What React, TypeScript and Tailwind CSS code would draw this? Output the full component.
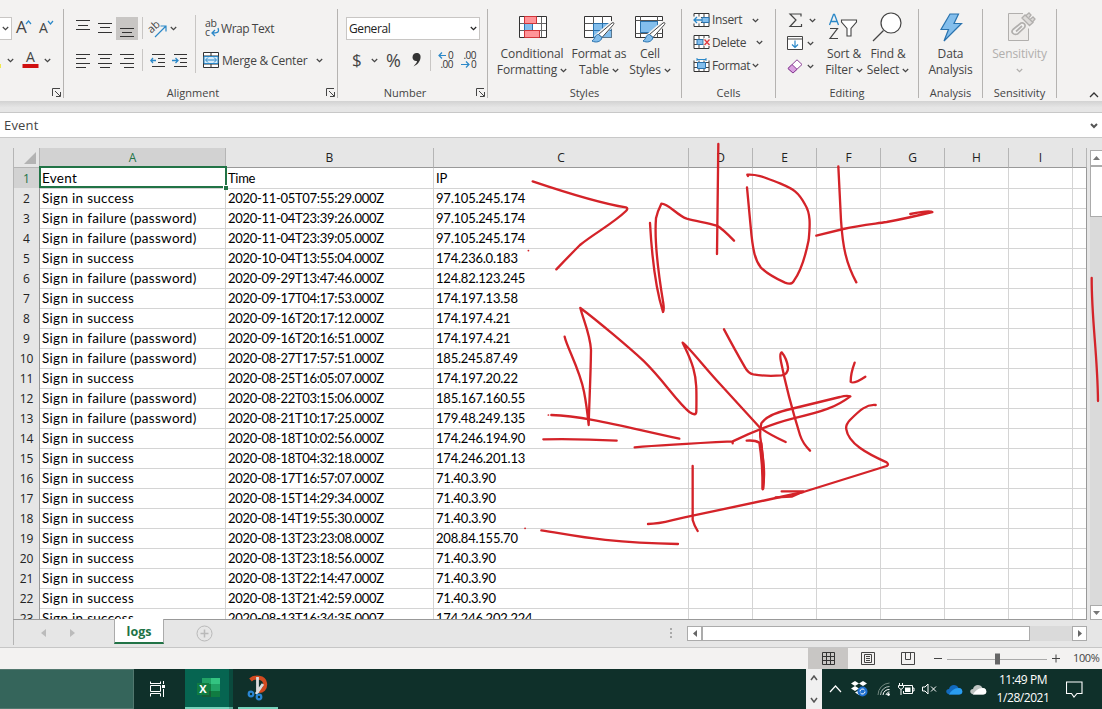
import type { ReactNode } from "react";
import { clsx } from "clsx";

type LogRow = [string, string, string];

const OK = "Sign in success";
const FAIL = "Sign in failure (password)";

const rows: LogRow[] = [
  ["Event", "Time", "IP"],
  [OK, "2020-11-05T07:55:29.000Z", "97.105.245.174"],
  [FAIL, "2020-11-04T23:39:26.000Z", "97.105.245.174"],
  [FAIL, "2020-11-04T23:39:05.000Z", "97.105.245.174"],
  [OK, "2020-10-04T13:55:04.000Z", "174.236.0.183"],
  [FAIL, "2020-09-29T13:47:46.000Z", "124.82.123.245"],
  [OK, "2020-09-17T04:17:53.000Z", "174.197.13.58"],
  [OK, "2020-09-16T20:17:12.000Z", "174.197.4.21"],
  [FAIL, "2020-09-16T20:16:51.000Z", "174.197.4.21"],
  [FAIL, "2020-08-27T17:57:51.000Z", "185.245.87.49"],
  [OK, "2020-08-25T16:05:07.000Z", "174.197.20.22"],
  [FAIL, "2020-08-22T03:15:06.000Z", "185.167.160.55"],
  [FAIL, "2020-08-21T10:17:25.000Z", "179.48.249.135"],
  [OK, "2020-08-18T10:02:56.000Z", "174.246.194.90"],
  [OK, "2020-08-18T04:32:18.000Z", "174.246.201.13"],
  [OK, "2020-08-17T16:57:07.000Z", "71.40.3.90"],
  [OK, "2020-08-15T14:29:34.000Z", "71.40.3.90"],
  [OK, "2020-08-14T19:55:30.000Z", "71.40.3.90"],
  [OK, "2020-08-13T23:23:08.000Z", "208.84.155.70"],
  [OK, "2020-08-13T23:18:56.000Z", "71.40.3.90"],
  [OK, "2020-08-13T22:14:47.000Z", "71.40.3.90"],
  [OK, "2020-08-13T21:42:59.000Z", "71.40.3.90"],
  [OK, "2020-08-13T16:34:35.000Z", "174.246.202.224"],
];

const gridCols = "grid grid-cols-[27px_186px_208px_255px_64px_64px_64px_64px_64px_64px_14px]";
const columns = ["A", "B", "C", "D", "E", "F", "G", "H", "I", ""];
const cellText = ["text-[13.5px] tracking-[0.3px]", "text-[13px] tracking-[-0.3px]", "text-[13px] tracking-[-0.22px]"];

function Chevron({ className = "" }: { className?: string }) {
  return (
    <svg width="7" height="5" viewBox="0 0 7 5" className={clsx("shrink-0", className)}>
      <path d="M.8 1 3.5 3.7 6.2 1" fill="none" stroke="currentColor" strokeWidth="1.2" />
    </svg>
  );
}

function Launcher({ className = "" }: { className?: string }) {
  return (
    <svg width="9" height="9" viewBox="0 0 9 9" className={clsx("shrink-0", className)} fill="none" stroke="#444" strokeWidth="1">
      <path d="M.5 8V.5H8M3 3l5 5M8.5 4v4.5H4" />
    </svg>
  );
}

function Group({ label, width, launcher, children }: { label: string; width: string; launcher?: boolean; children: ReactNode }) {
  return (
    <section className={clsx("mt-[9px] flex h-[89px] shrink-0 flex-col border-r border-[#b5b3b1]", width)}>
      <div className="flex h-[78px]">{children}</div>
      <div className="flex h-[11px] items-center justify-center">
        <span className={clsx("flex-1 text-center text-[11px] leading-[11px] whitespace-nowrap", launcher && "pr-1")}>{label}</span>
        {launcher && <Launcher className="mr-[2px]" />}
      </div>
    </section>
  );
}

function Lines({ y, x1, x2 }: { y: number[]; x1: number[]; x2: number[] }) {
  return (
    <svg width="22" height="23" viewBox="0 0 22 23" stroke="#333" strokeWidth="1" className="shrink-0">
      {y.map((v, i) => (
        <path key={v} d={`M${x1[i]} ${v + 0.5}H${x2[i]}`} />
      ))}
    </svg>
  );
}

function Indent({ out }: { out?: boolean }) {
  return (
    <svg width="16" height="15" viewBox="0 0 16 15" fill="none" className="shrink-0">
      <path d="M2 1.5h13M8 5.5h7M8 9.5h7M2 13.5h13" stroke="#333" />
      <path d={out ? "M6 7.5H1M3 5 .8 7.5 3 10" : "M0 7.5h5.500M3.500 5 6 7.500 3.500 10"} stroke="#2b88c8" strokeWidth="1.300" />
    </svg>
  );
}

function BigButton({ icon, top, bottom, width, disabled, ml = "" }: { icon: ReactNode; top: string; bottom: string; width: string; disabled?: boolean; ml?: string }) {
  return (
    <div className={clsx("flex shrink-0 flex-col items-center text-[12px] leading-4 tracking-[-0.12px] whitespace-nowrap", width, ml, disabled && "text-[#b1afad]")}>
      <div className="flex h-[37px] items-start justify-center">{icon}</div>
      <span>{top}</span>
      {bottom === "Analysis" ? (
        <span>{bottom}</span>
      ) : (
        <span className="flex h-4 items-center gap-[3px]">
          {bottom}
          <Chevron />
        </span>
      )}
    </div>
  );
}

function CondIcon() {
  return (
    <svg width="28" height="24" viewBox="0 0 28 24" className="mt-[6px] mr-[-1px]">
      <path d="M.5 1.500h27v21H.5z" fill="#fff" />
      <path d="M.5 8.500h27M.5 15.500h27M5.500 1v21M22.500 1v21" stroke="#666" />
      <path d="M5.500 1.500h12v7h-12zM5.500 15.500h15v7h-15z" fill="#ff9498" stroke="#d13438" />
      <path d="M5.500 8.500h8v7h-8z" fill="#83beec" stroke="#2a73ae" />
      <path d="M.5 1.500h27v21H.5z" fill="none" stroke="#333" />
      <path d="M5.500 1.500h12v7h-12zM5.500 15.500h15v7h-15z" fill="none" stroke="#d13438" />
    </svg>
  );
}

function TableIcon({ cell }: { cell?: boolean }) {
  return (
    <svg width="31" height="28" viewBox="0 0 31 28" className="mt-[6px]">
      <path d="M.5 1.500h27v21H.5z" fill="#fff" stroke="#333" />
      {cell ? (
        <>
          <path d="M.5 5.500h27M.5 18.500h27M5.500 1v21M22.500 1v21" stroke="#555" />
          <path d="M5.500 6.500h17v11h-17z" fill="#83beec" stroke="#2a73ae" />
        </>
      ) : (
        <>
          <path d="M9.500 8.500h18v14h-18z" fill="#83beec" />
          <path d="M.5 8.500h27M.5 15.500h27M9.500 1v21M18.500 1v21" stroke="#555" />
          <path d="M9.500 8.500h18M9.500 8.500v14M9.500 15.500h18M18.500 8.500v14" stroke="#2a73ae" />
        </>
      )}
      <path d="M12 23 29.500 8" stroke="#f3f2f1" strokeWidth="6" />
      <path d="M14.500 19.500 28 8c1.500-1 2.500 0 1.500 1.500L18 22.500z" fill="#fff" stroke="#444" />
      <path d="M8 26c4 2 9 1 10-3.500L14.500 19.500c-4 0-3 4.500-6.500 6.500z" fill="#83beec" stroke="#2a73ae" />
    </svg>
  );
}

function CellsIcon({ kind }: { kind: "insert" | "delete" | "format" }) {
  return (
    <svg width="17" height="15" viewBox="0 0 17 15" fill="none" className="shrink-0">
      <path d="M1 .5h15v13H1z" fill="#fff" stroke="#333" />
      <path d="M1 4.500h15M1 9.500h15M6 .5v13M11 .5v13" stroke="#444" />
      {kind === "insert" && (
        <>
          <path d="M9 4.500h7v5H9z" fill="#83beec" stroke="#2a73ae" />
          <path d="M0 3.500h8v7H0z" fill="#f3f2f1" />
          <path d="M9 7H1M4 4 1 7l3 3" stroke="#2b88c8" strokeWidth="1.300" />
        </>
      )}
      {kind === "delete" && (
        <>
          <path d="M4 4.500h6v5H4z" fill="#83beec" stroke="#2a73ae" />
          <path d="M10.500 3h7v8h-7z" fill="#f3f2f1" />
          <path d="m11.500 4.500 5 5.500M16.500 4.500l-5 5.500" stroke="#e03a3e" strokeWidth="1.300" />
        </>
      )}
      {kind === "format" && (
        <>
          <path d="M0 0h17v2.500H0z" fill="#f3f2f1" />
          <path d="M4.500 4.500h8v6h-8z" fill="#83beec" stroke="#2a73ae" />
          <path d="M4 1.500h9M4 0v3M13 0v3" stroke="#2b88c8" />
        </>
      )}
    </svg>
  );
}

function FontGroup() {
  return (
    <Group label="" width="w-16" launcher>
      <div className="flex flex-col pt-[3px]">
        <div className="flex h-8 items-center">
          <div className="flex h-[23px] w-3 items-center justify-center border-y border-r border-[#c8c6c4] bg-white">
            <Chevron />
          </div>
          <svg width="50" height="24" className="ml-1 shrink-0 overflow-visible">
            <text x="0" y="17" fontSize="17" fill="#444">A</text>
            <path d="m10 8 2.500-3L15 8" fill="none" stroke="#2b88c8" strokeWidth="1.200" />
            <text x="23" y="17" fontSize="14" fill="#444">A</text>
            <path d="m32 5 2.500 3L37 5" fill="none" stroke="#2b88c8" strokeWidth="1.200" />
          </svg>
        </div>
        <div className="flex h-8 items-center">
          <span className="mt-3 h-1 w-px bg-[#f1e94b]" />
          <Chevron className="ml-1.5" />
          <svg width="17" height="20" className="ml-2 shrink-0 overflow-visible">
            <text x="8.500" y="11.500" fontSize="14" textAnchor="middle" fill="#444">A</text>
            <path d="M.5 14h16v4H.5z" fill="#d01010" />
          </svg>
          <Chevron className="ml-[5px]" />
        </div>
      </div>
    </Group>
  );
}

function AlignmentGroup() {
  return (
    <Group label="Alignment" width="w-[274px]" launcher>
      <div className="w-[131px] pt-[3px] pl-2">
        <div className="flex h-8 items-center">
          <Lines y={[3, 8, 12]} x1={[4, 6, 4]} x2={[18, 16, 18]} />
          <Lines y={[6, 10, 15]} x1={[4, 6, 4]} x2={[18, 16, 18]} />
          <div className="bg-[#c8c6c4]">
            <Lines y={[11, 15, 19]} x1={[4, 6, 4]} x2={[18, 16, 18]} />
          </div>
          <span className="ml-1 h-[22px] w-px bg-[#c8c6c4]" />
          <svg width="19" height="19" viewBox="0 0 19 19" className="ml-1.5 shrink-0 overflow-visible">
            <text x="0" y="11" fontSize="11" fill="#444" transform="rotate(-42 6 10)">ab</text>
            <path d="m6 18 10.500-10.500M11.500 7h5.500v5.500" fill="none" stroke="#2b88c8" strokeWidth="1.200" />
          </svg>
          <Chevron className="ml-[2px]" />
        </div>
        <div className="flex h-8 items-center">
          <Lines y={[5, 9, 14, 18]} x1={[4, 4, 4, 4]} x2={[18, 14, 18, 14]} />
          <Lines y={[5, 9, 14, 18]} x1={[4, 6, 4, 6]} x2={[18, 16, 18, 16]} />
          <Lines y={[5, 9, 14, 18]} x1={[4, 8, 4, 8]} x2={[18, 18, 18, 18]} />
          <span className="ml-1 h-[22px] w-px bg-[#c8c6c4]" />
          <span className="ml-[7px] flex gap-1.5">
            <Indent out />
            <Indent />
          </span>
        </div>
      </div>
      <span className="mt-1.5 h-[58px] w-px bg-[#c8c6c4]" />
      <div className="pt-[3px] pl-[7px] text-[12px] whitespace-nowrap">
        <div className="flex h-8 items-center tracking-[-0.45px]">
          <svg width="14" height="18" viewBox="0 0 14 18" className="mr-[2px] ml-[2px] shrink-0 overflow-visible">
            <text x="0" y="8" fontSize="10.500" fill="#444">ab</text>
            <text x="0" y="16.500" fontSize="10.500" fill="#444">c</text>
            <path d="M13 9c2 5-2 5-6 5M10 11l-3 3 3 3" fill="none" stroke="#2b88c8" strokeWidth="1.300" />
          </svg>
          <span className="pt-px">Wrap Text</span>
        </div>
        <div className="flex h-8 items-center tracking-[-0.2px]">
          <svg width="16" height="16" viewBox="0 0 16 16" className="mr-[3px] shrink-0" fill="none">
            <path d="M.5 .5h15v15H.5z" fill="#fff" stroke="#333" />
            <path d="M8 0v4M8 12v4M0 4h16M0 12h16" stroke="#333" />
            <path d="M1 4.500h14v7H1z" fill="#d9ecf9" stroke="#2b88c8" />
            <path d="M3 8h10M5 5.500 2.500 8 5 10.500M11 5.500 13.500 8 11 10.500" stroke="#2b88c8" />
          </svg>
          <span className="pt-px">Merge &amp; Center</span>
          <Chevron className="ml-[9px]" />
        </div>
      </div>
    </Group>
  );
}

function NumberGroup() {
  return (
    <Group label="Number" width="w-[150px]" launcher>
      <div className="pt-[3px] pl-2">
        <div className="flex h-8 items-center">
          <div className="flex h-[23px] w-[134px] items-center justify-between border border-[#c8c6c4] bg-white pt-px pr-[2px] pl-[2px] text-[12px] tracking-[-0.4px] text-[#222]">
            General
            <Chevron />
          </div>
        </div>
        <div className="flex h-8 items-center">
          <span className="ml-1.5 w-3 text-[17px] leading-5">$</span>
          <Chevron className="ml-[7px]" />
          <span className="ml-[8px] w-[19px] text-[18px] leading-5">%</span>
          <svg width="10" height="14" viewBox="0 0 10 14" className="ml-[7px]">
            <path d="M4.500 0C7.500 0 9 2 8.500 5 8 9 5 12 1.500 13.500 3.500 11 5 9.500 5 8 2.500 8.500.5 6.500.5 4.200.5 1.500 2.500 0 4.500 0z" fill="#333" />
          </svg>
          <span className="ml-[8px] h-[21px] w-px bg-[#c8c6c4]" />
          <svg width="17" height="18" className="ml-[7px] shrink-0 overflow-visible">
            <text x="10" y="8" fontSize="10" fill="#333">0</text>
            <text x="2.500" y="17" fontSize="10" fill="#333" textLength="13">.00</text>
            <path d="M8 4.500H1M4 1.500 1 4.500l3 3" fill="none" stroke="#2b88c8" strokeWidth="1.200" />
          </svg>
          <svg width="17" height="18" className="ml-[6px] shrink-0 overflow-visible">
            <text x="2.500" y="8" fontSize="10" fill="#333" textLength="13">.00</text>
            <text x="10" y="17" fontSize="10" fill="#333">0</text>
            <path d="M0 13.500h8M5 10.500l3 3-3 3" fill="none" stroke="#2b88c8" strokeWidth="1.200" />
          </svg>
        </div>
      </div>
    </Group>
  );
}

function Ribbon() {
  return (
    <div className="flex h-[101px] bg-[#f3f2f1] text-[#444]">
      <FontGroup />
      <AlignmentGroup />
      <NumberGroup />
      <Group label="Styles" width="w-[194px]">
        <BigButton icon={<CondIcon />} top="Conditional" bottom="Formatting" width="w-[72px]" ml="ml-2" />
        <BigButton icon={<TableIcon />} top="Format as" bottom="Table" width="w-[56px]" ml="ml-[3px]" />
        <BigButton icon={<TableIcon cell />} top="Cell" bottom="Styles" width="w-[44px]" ml="ml-[1px]" />
      </Group>
      <Group label="Cells" width="w-[94px]">
        <div className="flex flex-col pl-[11px] text-[12px] tracking-[-0.35px]">
          <div className="flex h-[22px] items-center gap-[2px]"><CellsIcon kind="insert" />Insert<Chevron className="ml-2" /></div>
          <div className="flex h-[23px] items-center gap-[2px]"><CellsIcon kind="delete" />Delete<Chevron className="ml-2" /></div>
          <div className="flex h-[23px] items-center gap-[2px]"><CellsIcon kind="format" />Format<Chevron /></div>
        </div>
      </Group>
      <Group label="Editing" width="w-[143px]">
        <div className="flex flex-col pl-[11px]">
          <div className="flex h-[22px] items-center">
            <svg width="15" height="15" viewBox="0 0 15 15" className="ml-px"><path d="M13 3.500V1H2l6 6-6 6.500h11.500V11" fill="none" stroke="#444" strokeWidth="1.200" /></svg>
            <Chevron className="ml-[6px]" />
          </div>
          <div className="flex h-6 items-center">
            <svg width="16" height="14" viewBox="0 0 16 14" fill="none"><path d="M.5.5h15v13H.5z" fill="#fff" stroke="#444" /><path d="M.5 3h15" stroke="#444" /><path d="M8 4.500v7M5 8.500l3 3 3-3" stroke="#2b88c8" strokeWidth="1.200" /></svg>
            <Chevron className="ml-[4px]" />
          </div>
          <div className="flex h-[22px] items-center">
            <svg width="16" height="15" viewBox="0 0 16 15"><path d="M1 9.500 10 .8 15 5.500 6 14z" fill="#fff" stroke="#8a3f96" /><path d="M1 9.500 5 5.500l5 4.800L6 14z" fill="#d9a0e0" stroke="#8a3f96" /></svg>
            <Chevron className="ml-[4px]" />
          </div>
        </div>
        <BigButton
          ml="ml-[6px]"
          width="w-[44px]"
          top="Sort &"
          bottom="Filter"
          icon={
            <svg width="30" height="28" viewBox="0 0 30 28" className="mt-1 mr-[2px]" fill="none">
              <path d="m1.500 12 4-10.500h1l4 10.500M3 8.500h6" stroke="#2b88c8" strokeWidth="1.300" />
              <path d="M2 15.500h7.500L2 25.500h8" stroke="#444" strokeWidth="1.200" />
              <path d="M13.500 7h15v2L23 15.500V23h-4v-7.500L13.500 9z" fill="#fff" stroke="#444" strokeWidth="1.100" />
            </svg>
          }
        />
        <BigButton
          width="w-[44px]"
          top="Find &"
          bottom="Select"
          icon={
            <svg width="30" height="30" viewBox="0 0 30 30" className="mt-[3px] mr-[3px]" fill="none" stroke="#444" strokeWidth="1.200">
              <circle cx="19" cy="11" r="10" fill="#fff" />
              <path d="M11.500 18.500 1 29" />
            </svg>
          }
        />
      </Group>
      <Group label="Analysis" width="w-16">
        <BigButton
          width="w-[63px]"
          top="Data"
          bottom="Analysis"
          icon={
            <svg width="24" height="29" viewBox="0 0 24 29" className="mt-1">
              <path d="M11 1h8.500L15 10.500h7.500L5 28l4.500-11.500H2z" fill="#83beec" stroke="#2a73ae" strokeWidth="1.200" />
            </svg>
          }
        />
      </Group>
      <Group label="Sensitivity" width="w-[74px]">
        <BigButton
          disabled
          width="w-[73px]"
          top="Sensitivity"
          bottom=""
          icon={
            <svg width="28" height="31" viewBox="0 0 28 31" className="mt-[2px] ml-[5px]" fill="none" stroke="#b1afad">
              <path d="M15 2.500H.5v27h20v-12" fill="#eeecea" />
              <path d="m5 18.500 8-6.500c3-1 5 2 3.500 4.500l-7 6.500c-4 1.500-7-2-4.500-4.500z" fill="#f3f2f1" strokeWidth="1.700" />
              <path d="m8 20.500 6-5.500" strokeWidth="1.700" />
              <path d="m14 7 3-3 8 7.500-3.500 3zM18 4.500 21 2l2 2-2 2.500M22 8.500 25 6l2 2-2.500 3" fill="#dddbd9" strokeWidth="1.300" />
            </svg>
          }
        />
      </Group>
      <svg width="10" height="6" viewBox="0 0 10 6" className="mt-[92px] ml-[32px]"><path d="m1 5 4-4 4 4" fill="none" stroke="#333" strokeWidth="1.300" /></svg>
    </div>
  );
}

function Sheet() {
  return (
    <div className="flex h-[482px] bg-[#e6e6e6] pt-[10px]">
      <div className="ml-[13px] h-[472px] w-[1074px] shrink-0 overflow-hidden border-b border-[#999] font-[Lato,sans-serif]">
        <div className={clsx(gridCols, "h-5")}>
          <div className="flex items-end justify-end border-r border-b border-l border-[#b5b5b5] p-[3px]">
            <svg width="12" height="12"><path d="M12 0v12H0z" fill="#b3b3b3" /></svg>
          </div>
          {columns.map((c, i) => (
            <div
              key={i}
              className={clsx(
                "flex items-center justify-center border-r border-b font-[Open_Sans,sans-serif] text-[12px]",
                i === 0 ? "border-r-[#b5b5b5] border-b-[#217346] bg-[#d2d2d2] text-[#217346]" : "border-r-[#b5b5b5] border-b-[#999] text-[#222]",
              )}
            >
              {c}
            </div>
          ))}
        </div>
        {rows.map((row, r) => (
          <div key={r} className={clsx(gridCols, "h-5 bg-white")}>
            <div
              className={clsx(
                "flex items-center justify-center border-r border-b border-l border-[#b5b5b5] border-r-[#999] font-[Open_Sans,sans-serif] text-[12px] leading-[19px]",
                r === 0 ? "bg-[#d2d2d2] text-[#217346]" : "bg-[#e6e6e6] text-[#222]",
              )}
            >
              {r + 1}
            </div>
            {columns.map((_, c) => (
              <div
                key={c}
                className={clsx("relative border-r border-b border-[#d4d4d4] pl-[2px] leading-[20px] whitespace-nowrap text-black", cellText[c], c === 9 && "border-r-[#999]")}
              >
                {row[c]}
                {r === 0 && c === 0 && (
                  <>
                    <span className="absolute -top-[2px] -left-[1px] h-[22px] w-[188px] border-2 border-[#217346]" />
                    <span className="absolute top-[17px] left-[183px] z-10 h-[5px] w-[5px] border-t border-l border-white bg-[#217346]" />
                  </>
                )}
              </div>
            ))}
          </div>
        ))}
      </div>
      <div className="mt-[2px] ml-[3px] flex w-3 flex-col bg-[#dadada]">
        <div className="flex h-4 items-center justify-center border border-r-0 border-[#ababab] bg-white">
          <svg width="7" height="4"><path d="M3.500 0 7 4H0z" fill="#777" /></svg>
        </div>
        <div className="h-[51px] border border-r-0 border-[#ababab] bg-white" />
        <div className="mt-auto flex h-[15px] items-center justify-center border border-r-0 border-[#ababab] bg-white">
          <svg width="7" height="4"><path d="M0 0h7L3.500 4z" fill="#777" /></svg>
        </div>
      </div>
    </div>
  );
}

function SheetTabs() {
  return (
    <div className="flex h-7 border-b border-[#c6c6c6] bg-[#e6e6e6]">
      <div className="ml-[13px] flex h-[25px] w-[101px] items-center border-l border-[#b5b5b5]">
        <svg width="5" height="8" className="ml-[27px]"><path d="M5 0v8L0 4z" fill="#bbb" /></svg>
        <svg width="5" height="8" className="ml-[24px]"><path d="M0 0v8l5-4z" fill="#bbb" /></svg>
      </div>
      <div className="-mt-px flex h-[25px] w-[50px] items-center justify-center border-r border-b-2 border-l border-[#ababab] border-b-[#217346] bg-white pt-[4px] text-[12.5px] font-bold text-[#217346]">
        logs
      </div>
      <svg width="17" height="17" viewBox="0 0 17 17" className="mt-[5px] ml-8" fill="none" stroke="#b9b9b9">
        <circle cx="8.500" cy="8.500" r="7.500" />
        <path d="M8.500 4.500v8M4.500 8.500h8" strokeWidth="1.500" />
      </svg>
      <svg width="2" height="12" className="mt-[8px] ml-[457px]" fill="#aaa"><path d="M0 0h2v2H0zM0 4h2v2H0zM0 8h2v2H0z" /></svg>
      <div className="mt-[6px] ml-[15px] flex h-[15px] w-[400px] bg-[#dadada]">
        <div className="flex w-[15px] items-center justify-center border border-[#ababab] bg-white">
          <svg width="4" height="7"><path d="M4 0v7L0 3.500z" fill="#666" /></svg>
        </div>
        <div className="w-[328px] border border-[#ababab] bg-white" />
        <div className="ml-auto flex w-[15px] items-center justify-center border border-[#ababab] bg-white">
          <svg width="4" height="7"><path d="M0 0v7l4-3.500z" fill="#666" /></svg>
        </div>
      </div>
    </div>
  );
}

function StatusBar() {
  return (
    <div className="flex h-[21px] items-center bg-[#f3f2f1] pl-[808px] text-[11px] text-[#444]">
      <div className="flex h-full w-10 items-center justify-center bg-[#c8c6c4]">
        <svg width="13" height="13" fill="none" stroke="#333"><path d="M.5.500h12v12H.5zM4.500 0v13M8.500 0v13M0 4.500h13M0 8.500h13" /></svg>
      </div>
      <div className="flex w-10 items-center justify-center">
        <svg width="14" height="13" fill="none" stroke="#444"><path d="M.5.500h13v12H.5zM3.500 2.500h7v8h-7zM5 4.500h4M5 6.500h4M5 8.500h4" /></svg>
      </div>
      <div className="flex w-10 items-center justify-center">
        <svg width="14" height="13" fill="none" stroke="#444"><path d="M.5.500h13v12H.5zM4.500 0v7.500h5M9.500 0v7.500" /></svg>
      </div>
      <svg width="128" height="12" viewBox="0 0 128 12" className="ml-[5px] shrink-0" fill="none" stroke="#444">
        <path d="M1 5.500h8" />
        <path d="M14 6.500h100" stroke="#aaa" />
        <path d="M62 .5h5v11h-5z" fill="#666" stroke="none" />
        <path d="M119 5.500h8M123 1.500v8" />
      </svg>
      <span className="ml-[12px] tracking-[-0.4px]">100%</span>
    </div>
  );
}

function Taskbar() {
  return (
    <div className="flex h-10 bg-[#0f302a] text-white">
      <div className="w-[134px] border-y border-r border-[#52786f] bg-[#35655b]" />
      <svg width="17" height="16" viewBox="0 0 17 16" className="mt-3 ml-[15px]" fill="none" stroke="#fff">
        <path d="M1.500 3V.5M1 2.500h11M11.500.5v2.500M1.500 4.500h10v6h-10zM1.500 15.500V12.500h10v3M14.500 0v3M14.500 8v8" />
        <path d="M13 4h3v3h-3z" fill="#fff" stroke="none" />
      </svg>
      <div className="ml-[19px] flex h-10 w-[44px] items-center justify-center border-b-2 border-[#76d3bb] bg-[#066551]">
        <svg width="24" height="20" viewBox="0 0 24 20" className="ml-1">
          <path d="M5 0h18v19H5z" fill="#185c37" />
          <path d="M5 0h9v6H5z" fill="#21a366" />
          <path d="M14 0h9v6h-9z" fill="#33c481" />
          <path d="M14 6h9v7h-9z" fill="#21a366" />
          <path d="M5 6h9v7H5zM14 13h9v6h-9z" fill="#107c41" />
          <path d="M0 5h12v12H0z" fill="#107c41" />
          <text x="6" y="15" fontSize="11" fontWeight="700" textAnchor="middle" fill="#fff">X</text>
        </svg>
      </div>
      <div className="h-10 w-1 border-b-2 border-[#5fae9c] bg-[#0a4a3d]" />
      <div className="ml-[5px] flex h-10 w-10 items-center justify-center border-b-2 border-[#76d3bb]">
        <svg width="22" height="26" viewBox="0 0 22 26" fill="none">
          <path d="M3.500 5C8 1 17 2 18 8c1 6-3 8-6 8" stroke="#d24a20" strokeWidth="4" />
          <path d="M10.500 2v16M16 9 9 19" stroke="#dcdcdc" strokeWidth="2.800" />
          <circle cx="4" cy="19" r="2.300" stroke="#2a86d4" strokeWidth="2.200" />
          <circle cx="12" cy="22" r="2.300" stroke="#2a86d4" strokeWidth="2.200" />
        </svg>
      </div>
      <div className="ml-auto flex h-10 w-4 flex-col items-center justify-between bg-[#f0f0f0] py-[6px] text-[#555]">
        <svg width="8" height="6" fill="none" stroke="#555" strokeWidth="1.500"><path d="m1 5 3-4 3 4" /></svg>
        <svg width="8" height="6" fill="none" stroke="#555" strokeWidth="1.500"><path d="m1 1 3 4 3-4" /></svg>
      </div>
      <div className="flex w-[280px] items-center">
        <svg width="13" height="8" className="ml-[7px]" fill="none" stroke="#fff" strokeWidth="1.200"><path d="m1 7 5.500-6L12 7" /></svg>
        <svg width="17" height="16" viewBox="0 0 17 16" className="ml-[9px]">
          <path d="M4 0l4 2.500L4 5 0 2.500zM12 0l4 2.500L12 5 8 2.500zM4 5l4 2.500L4 10 0 7.500zM4 11.500l4-2.500v5z" fill="#fff" />
          <circle cx="11.500" cy="10.500" r="5" fill="#1d6fd0" />
          <path d="M9 10.500a2.500 2.500 0 0 1 4.500-1.500M14 10.500a2.500 2.500 0 0 1-4.500 1.500" fill="none" stroke="#fff" />
        </svg>
        <svg width="13" height="14" viewBox="0 0 13 14" className="ml-[9px]" fill="none" stroke="#fff">
          <path d="M1 13A12 12 0 0 1 12.500 1" stroke="#71877f" />
          <path d="M3.500 13A9 9 0 0 1 12.500 4.500" stroke="#b5c1bd" />
          <path d="M6 13a6 6 0 0 1 6.500-5.500M9 13c.5-2 2-3 3.500-3" />
          <circle cx="11.500" cy="12.500" r="1" fill="#fff" />
        </svg>
        <svg width="17" height="13" viewBox="0 0 17 13" className="ml-[8px]" fill="none" stroke="#fff">
          <path d="M5.500 2.500h9v8h-9V8M14.500 5h1.500v3h-1.500M1.500 0v2.500M4.500 0v2.500M.5 2.500h5v2L3 6.500.5 4.500zM3 6.500V12" />
          <path d="M7 4.500h5.500v4.500H7z" fill="#fff" stroke="none" />
        </svg>
        <svg width="15" height="12" viewBox="0 0 15 12" className="ml-[7px]" fill="none" stroke="#fff">
          <path d="M.5 4h2.500L6 1v10L3 8H.5zM9 3.500l5 5M14 3.500l-5 5" />
        </svg>
        <svg width="17" height="11" viewBox="0 0 17 11" className="ml-[9px]">
          <path d="M3.500 10.500C-1 10-.5 5 3 5 4 0 11 0 12.500 4c5 0 5 6.500.5 6.500z" fill="#1269bd" />
          <path d="M3 10.500C5 7 8 4 12.500 4c5 0 5 6.500.5 6.500z" fill="#2a9df0" />
        </svg>
        <svg width="17" height="11" viewBox="0 0 17 11" className="ml-[7px]">
          <path d="M3.500 10.500C-1 10-.5 5 3 5 4 0 11 0 12.500 4c5 0 5 6.500.5 6.500z" fill="#bfc4c2" />
          <path d="M3 10.500C5 7 8 4 12.500 4c5 0 5 6.500.5 6.500z" fill="#fff" />
        </svg>
        <div className="ml-[9px] w-[54px] text-center text-[12px] leading-[18px] tracking-[-0.45px] whitespace-nowrap">
          <div>11:49 PM</div>
          <div>1/28/2021</div>
        </div>
        <svg width="17" height="17" viewBox="0 0 17 17" className="ml-[16px]" fill="none" stroke="#fff" strokeWidth="1.100">
          <path d="M.5 1h15.500v11.500h-5L8 16l-2.500-3.500h-5z" />
        </svg>
      </div>
    </div>
  );
}

// Freehand notes drawn over the whole window
function Ink() {
  return (
    <svg
      width="1102"
      height="709"
      viewBox="0 0 1102 709"
      className="pointer-events-none absolute top-0 left-0 z-20"
      fill="none"
      stroke="#d42329"
      strokeWidth="7"
      strokeLinecap="round"
      strokeLinejoin="round"
    >
      <g transform="translate(520 140) scale(.33333)">
        <path d="M38 124C130 155 240 190 318 202Q326 205 318 213C280 250 220 282 180 315Q150 345 109 388" />
        <path d="M390 249C395 340 405 440 429 516Q433 510 430 490C415 400 402 310 408 235Q412 215 424 191C445 190 470 225 500 236C530 245 560 247 590 257Q605 264 642 302" />
        <path d="M595 12 591 342" />
        <path d="M681 142 692 260C698 330 705 360 722 382Q745 405 795 428Q815 436 822 422C845 390 860 330 866 300C871 250 871 220 856 195C835 155 820 147 780 130C740 115 715 102 682 104l2 4" />
        <path d="M955 79 963 240C968 320 978 370 1009 427M889 287 970 267C1020 255 1060 252 1100 246Q1160 235 1237 216Q1225 211 1171 222" />
        <path d="M25 332h.5" strokeWidth="5" />
      </g>
      <g transform="translate(520 290) scale(.33333)">
        <path d="M134 140C140 170 180 240 192 305Q200 345 206 405C208 330 212 260 213 180C210 130 190 90 181 54C230 90 330 175 370 212C430 270 470 335 508 366Q528 380 529 365C530 300 530 270 520 235C510 200 498 180 488 158C510 175 560 240 600 282L720 413Q745 432 797 456" />
        <path d="M612 118Q645 180 675 232Q685 250 700 253Q740 260 785 256Q805 252 804 232Q800 205 785 187Q778 190 783 215C800 300 820 370 840 435Q848 460 870 482" />
        <path d="M1004 218Q992 250 992 275Q1000 284 1036 260" />
        <path d="M94 375C200 378 330 415 478 446M70 448Q180 446 290 452" />
        <path d="M344 472Q430 464 638 454v6M638 454Q740 405 820 385C910 365 950 350 991 319Q980 315 960 321L800 360Q740 375 724 400Q718 430 722 450C728 500 738 550 728 598Q728 520 718 458Q705 450 680 452" />
        <path d="M723 460Q732 530 729 595" strokeWidth="9" />
        <path d="M518 528V690Q522 705 533 723" />
        <path d="M384 702C430 702 450 690 518 677L740 630 850 606 1100 528Q1108 523 1100 517C1040 490 985 460 979 418Q976 405 990 390C1020 360 1040 342 1067 345" />
        <path d="M785 604H850L815 620 767 622" />
        <path d="M64 721C150 733 240 758 474 762" />
        <path d="M85 375h.5M15 715h.5" strokeWidth="5" />
      </g>
      <path d="M1091.700 278C1091.500 320 1097.500 353 1098 401" strokeWidth="2.300" />
    </svg>
  );
}

export default function App() {
  return (
    <div className="relative h-[709px] w-[1102px] overflow-hidden bg-[#e6e6e6] font-[Open_Sans,sans-serif]">
      <Ribbon />
      <div className="h-[11px] bg-gradient-to-b from-[#d2d2d2] to-[#e6e6e6] to-60%" />
      <div className="flex h-[26px] items-center border-y border-[#c8c8c8] bg-white pt-px pl-1 text-[13px] tracking-[0.2px] text-[#444]">
        Event
        <svg width="8" height="6" className="mr-[4px] ml-auto" fill="none" stroke="#555" strokeWidth="2"><path d="m1 1 3 3 3-3" /></svg>
      </div>
      <Sheet />
      <SheetTabs />
      <StatusBar />
      <Taskbar />
      <Ink />
    </div>
  );
}
